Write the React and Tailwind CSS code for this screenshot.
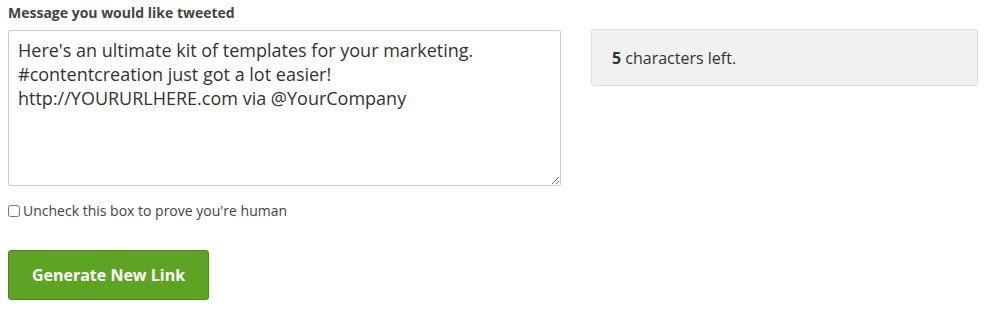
import React, { useState } from "react";

const App = () => {
  const [message, setMessage] = useState(
    "Here's an ultimate kit of templates for your marketing. #contentcreation just got a lot easier! http://YOURURLHERE.com via @YourCompany"
  );
  const [human, setHuman] = useState(false);

  return (
    <div className="w-[984px] h-[310px] bg-white font-['Open_Sans',sans-serif] text-[#333] pl-2 pr-[6px] pt-[4px]">
      <div className="flex gap-[30px]">
        <div className="w-[553px] flex flex-col">
          <label className="text-[14px] font-bold text-[#444] leading-[18px]">
            Message you would like tweeted
          </label>
          <textarea
            className="mt-[8px] w-[553px] h-[156px] border border-[#ccc] rounded-[2px] px-[9px] pt-[7px] text-[18px] leading-[24px] text-[#333] outline-none"
            value={message}
            onChange={(e) => setMessage(e.target.value)}
          />
          <label className="flex items-center mt-[16px] text-[14px] text-[#444] leading-[18px]">
            <input
              type="checkbox"
              className="w-[12px] h-[12px] mr-[3px]"
              checked={human}
              onChange={(e) => setHuman(e.target.checked)}
            />
            Uncheck this box to prove you're human
          </label>
          <div className="mt-[30px]">
            <button className="w-[201px] h-[50px] bg-[#5ea424] border border-[#4b8a1b] rounded-[3px] text-white text-[16px] font-bold">
              Generate New Link
            </button>
          </div>
        </div>
        <div className="flex-1 mt-[25px]">
          <div className="h-[57px] bg-[#f1f1f1] border border-[#ddd] rounded-[3px] flex items-center px-[20px] text-[16px] text-[#333]">
            <span>
              <b>5</b> characters left.
            </span>
          </div>
        </div>
      </div>
    </div>
  );
};

export default App;
